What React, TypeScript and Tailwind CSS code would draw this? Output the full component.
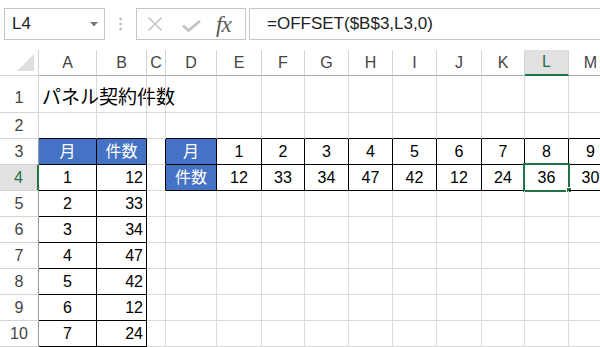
import React from "react";

const colNames = ["A", "B", "C", "D", "E", "F", "G", "H", "I", "J", "K", "L", "M"];
const widths = [
  "w-[58px]",
  "w-[50px]",
  "w-[19px]",
  "w-[51px]",
  "w-[45px]",
  "w-[43px]",
  "w-[44px]",
  "w-[44px]",
  "w-[44px]",
  "w-[45px]",
  "w-[43px]",
  "w-[44px]",
  "w-[44px]",
];

type CellDef = { text?: string; align?: "l" | "c" | "r"; blue?: boolean; title?: boolean };

const months = ["1", "2", "3", "4", "5", "6", "7", "8", "9"];
const counts = ["12", "33", "34", "47", "42", "12", "24", "36", "30"];

function getCell(r: number, c: number): CellDef {
  if (r === 1 && c === 0) return { text: "パネル契約件数", align: "l", title: true };
  if (r === 3) {
    if (c === 0) return { text: "月", align: "c", blue: true };
    if (c === 1) return { text: "件数", align: "c", blue: true };
    if (c === 3) return { text: "月", align: "c", blue: true };
    if (c >= 4) return { text: months[c - 4], align: "c" };
  }
  if (r === 4) {
    if (c === 3) return { text: "件数", align: "c", blue: true };
    if (c >= 4) return { text: counts[c - 4], align: "c" };
  }
  if (r >= 4 && r <= 10) {
    if (c === 0) return { text: String(r - 3), align: "c" };
    if (c === 1) return { text: counts[r - 4], align: "r" };
  }
  return {};
}

function rightBlack(r: number, c: number) {
  if ((c === 0 || c === 1) && r >= 3 && r <= 10) return true;
  if (c >= 2 && (r === 3 || r === 4)) return true;
  return false;
}
function bottomBlack(r: number, c: number) {
  if ((c === 0 || c === 1) && r >= 2 && r <= 10) return true;
  if (c >= 3 && r >= 2 && r <= 4) return true;
  return false;
}

function Cell({ r, c }: { r: number; c: number }) {
  const d = getCell(r, c);
  const h = r === 1 ? "h-[37px]" : "h-[26px]";
  const br = rightBlack(r, c) ? "border-r-black" : "border-r-[#dadada]";
  const bb = bottomBlack(r, c) ? "border-b-black" : "border-b-[#dadada]";
  const align =
    d.align === "l"
      ? "justify-start pl-[3px]"
      : d.align === "r"
      ? "justify-end pr-[3px]"
      : "justify-center";
  const selected = r === 4 && c === 11;
  return (
    <div
      className={`relative shrink-0 flex border-r border-b ${widths[c]} ${h} ${br} ${bb} ${align} ${
        d.blue ? "bg-[#4472c4] text-white" : "text-black"
      } ${r === 1 ? "items-end pb-[5px]" : "items-center pt-[1px]"}`}
    >
      {d.text && (
        <span
          className={`whitespace-nowrap leading-none ${
            d.title ? "text-[19px]" : "text-[16px]"
          }`}
        >
          {d.text}
        </span>
      )}
      {selected && (
        <>
          <div className="absolute left-[-2px] top-[-2px] w-[47px] h-[29px] border-2 border-[#217346] pointer-events-none" />
          <div className="absolute left-[41px] top-[22px] w-[6px] h-[6px] bg-[#217346] border border-white" />
        </>
      )}
    </div>
  );
}

function RowHeader({ r }: { r: number }) {
  const h = r === 1 ? "h-[37px]" : "h-[26px]";
  const sel = r === 4;
  return (
    <div
      className={`shrink-0 w-[39px] ${h} flex justify-center border-b border-b-[#d4d4d4] ${
        sel
          ? "bg-[#e1e1e1] text-[#217346] border-r-2 border-r-[#217346]"
          : r >= 3
          ? "border-r border-r-[#9b9b9b] text-[#444]"
          : "border-r border-r-[#d4d4d4] text-[#444]"
      } ${r === 1 ? "items-end pb-[6px]" : "items-center pt-[1px]"}`}
    >
      <span className="text-[16px] leading-none">{r}</span>
    </div>
  );
}

export default function App() {
  const rows = [1, 2, 3, 4, 5, 6, 7, 8, 9, 10];
  return (
    <div className="w-[600px] h-[347px] overflow-hidden bg-white font-['Liberation_Sans','Noto_Sans_CJK_JP',sans-serif] text-[#222]">
      {/* formula bar */}
      <div className="h-[50px] flex items-start pt-[8px] pl-[4px]">
        <div className="w-[101px] h-[32px] border border-[#c6c6c6] flex items-center pl-[7px] pr-[6px] justify-between">
          <span className="text-[17px] text-[#222]">L4</span>
          <svg width="8" height="5" viewBox="0 0 8 5">
            <polygon points="0,0 8,0 4,4.5" fill="#777" />
          </svg>
        </div>
        <div className="w-[31px] h-[32px] flex items-center justify-center">
          <svg width="3" height="12" viewBox="0 0 3 12">
            <rect x="0.5" y="0" width="2" height="2" fill="#aaa" />
            <rect x="0.5" y="5" width="2" height="2" fill="#aaa" />
            <rect x="0.5" y="10" width="2" height="2" fill="#aaa" />
          </svg>
        </div>
        <div className="w-[110px] h-[32px] border border-[#c6c6c6] flex items-center">
          <svg className="ml-[10px]" width="16" height="16" viewBox="0 0 16 16">
            <path d="M1.5 1.5 L14.5 14.5 M14.5 1.5 L1.5 14.5" stroke="#c4c4c4" strokeWidth="1.6" />
          </svg>
          <svg className="ml-[19px] mt-[4px]" width="19" height="12" viewBox="0 0 19 12">
            <path d="M1 5.5 L6.5 10.5 L18 1" stroke="#c4c4c4" strokeWidth="2.8" fill="none" />
          </svg>
          <span className="ml-[15px] font-['Liberation_Serif',serif] italic text-[23px] leading-none text-[#5a5a5a] tracking-[-1px]">
            fx
          </span>
        </div>
        <div className="ml-[3px] flex-1 h-[32px] border border-r-0 border-[#c6c6c6] flex items-center pl-[17px]">
          <span className="text-[17px] text-[#222] whitespace-nowrap">=OFFSET($B$3,L3,0)</span>
        </div>
      </div>
      {/* column headers */}
      <div className="flex">
        <div className="shrink-0 w-[39px] h-[26px] border-r border-b border-[#d4d4d4] relative">
          <svg className="absolute left-[17px] top-[4px]" width="18" height="18" viewBox="0 0 18 18">
            <polygon points="0,17 17,17 17,0" fill="#dfdfdf" />
          </svg>
        </div>
        {colNames.map((n, i) => {
          const sel = n === "L";
          return (
            <div
              key={n}
              className={`shrink-0 ${widths[i]} h-[26px] border-r border-r-[#d4d4d4] flex items-center justify-center ${
                sel
                  ? "bg-[#e1e1e1] text-[#217346] border-b-2 border-b-[#217346]"
                  : "text-[#444] border-b border-b-[#ababab]"
              }`}
            >
              <span className="text-[16px] leading-none">{n}</span>
            </div>
          );
        })}
      </div>
      {rows.map((r) => (
        <div key={r} className="flex">
          <RowHeader r={r} />
          {colNames.map((_, c) => (
            <Cell key={c} r={r} c={c} />
          ))}
        </div>
      ))}
    </div>
  );
}
